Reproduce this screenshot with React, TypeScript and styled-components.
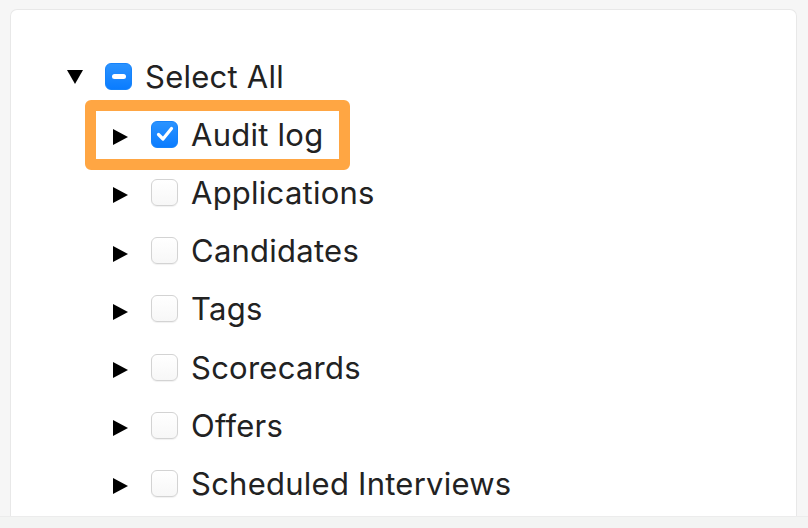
import React from 'react';
import styled, { createGlobalStyle } from 'styled-components';

const GlobalStyle = createGlobalStyle`
  html, body {
    margin: 0;
    padding: 0;
    background: #f6f6f6;
  }
  body {
    font-family: Inter, "Liberation Sans", Arial, sans-serif;
    color: #222;
  }
`;

const Page = styled.div`
  display: flex;
  flex-direction: column;
  height: 528px;
  overflow: hidden;
`;

const Card = styled.div`
  flex: 1;
  margin: 9px 11px 0 10px;
  background: #fff;
  border: 1px solid #e8e8e8;
  border-bottom: none;
  border-radius: 7px 7px 0 0;
  padding: 37px 0 0 55px;
`;

const Footer = styled.div`
  height: 11px;
  background: #f3f4f3;
  border-top: 1px solid #ececec;
`;

const Tree = styled.ul`
  list-style: none;
  margin: 0;
  padding: 0;
`;

const Children = styled.ul`
  list-style: none;
  margin: 0;
  padding: 0 0 0 47px;
`;

const Row = styled.li`
  position: relative;
  display: flex;
  align-items: center;
  height: 58.2px;
`;

const Toggle = styled.span<{ $open?: boolean }>`
  display: flex;
  width: 38px;
  flex: none;
  padding-top: ${p => (p.$open ? '1px' : '6px')};
  padding-left: ${p => (p.$open ? '1px' : '0')};
`;

const Box = styled.span<{ $state: 'checked' | 'mixed' | 'empty' }>`
  flex: none;
  box-sizing: border-box;
  width: 27px;
  height: 27px;
  border-radius: 6px;
  display: flex;
  align-items: center;
  justify-content: center;
  margin-right: 13px;
  background: ${p =>
    p.$state === 'empty'
      ? 'linear-gradient(#ffffff, #f7f7f7)'
      : 'linear-gradient(#2b93ff, #0a7cff)'};
  border: 1px solid ${p => (p.$state === 'empty' ? '#d3d3d3' : '#1683fb')};
  box-shadow: ${p => (p.$state === 'empty' ? '0 1px 1px rgba(0,0,0,0.06)' : 'none')};
`;

const Dash = styled.span`
  width: 14px;
  height: 5px;
  border-radius: 3px;
  background: #fff;
`;

const Label = styled.span`
  font-size: 31px;
  line-height: 1;
  color: #222;
  white-space: nowrap;
  letter-spacing: 0.25px;
`;

const Highlight = styled.span`
  position: absolute;
  left: -28px;
  top: -5px;
  width: 265px;
  height: 70px;
  box-sizing: border-box;
  border: 11px solid #ffa643;
  border-radius: 6px;
  pointer-events: none;
`;

const Caret = ({ open }: { open?: boolean }) =>
  open ? (
    <svg width="16" height="14" viewBox="0 0 16 14">
      <path d="M0 0 H16 L8 14 Z" fill="#000" />
    </svg>
  ) : (
    <svg width="15" height="16" viewBox="0 0 15 16">
      <path d="M0 0 L15 8 L0 16 Z" fill="#000" />
    </svg>
  );

const Check = () => (
  <svg width="18" height="16" viewBox="0 0 18 16">
    <path
      d="M2.5 8.5 L7 13 L15.5 2.5"
      fill="none"
      stroke="#fff"
      strokeWidth="3.2"
      strokeLinecap="round"
      strokeLinejoin="round"
    />
  </svg>
);

const groups = [
  { name: 'Audit log', checked: true },
  { name: 'Applications', checked: false },
  { name: 'Candidates', checked: false },
  { name: 'Tags', checked: false },
  { name: 'Scorecards', checked: false },
  { name: 'Offers', checked: false },
  { name: 'Scheduled Interviews', checked: false },
];

const App: React.FC = () => {
  return (
    <Page>
      <GlobalStyle />
      <Card>
        <Tree>
          <Row>
            <Toggle $open>
              <Caret open />
            </Toggle>
            <Box $state="mixed">
              <Dash />
            </Box>
            <Label>Select All</Label>
          </Row>
          <li>
            <Children>
              {groups.map((g, i) => (
                <Row key={g.name}>
                  {i === 0 ? <Highlight /> : null}
                  <Toggle>
                    <Caret />
                  </Toggle>
                  <Box $state={g.checked ? 'checked' : 'empty'}>
                    {g.checked ? <Check /> : null}
                  </Box>
                  <Label>{g.name}</Label>
                </Row>
              ))}
            </Children>
          </li>
        </Tree>
      </Card>
      <Footer />
    </Page>
  );
};

export default App;
